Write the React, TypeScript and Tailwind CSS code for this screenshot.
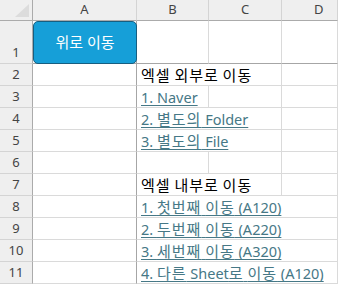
const FONT = { fontFamily: '"Noto Sans", "Noto Sans CJK KR", sans-serif' };

type Row = { n: number; text?: string; link?: boolean; span?: number };

const ROWS: Row[] = [
  { n: 2, text: '엑셀 외부로 이동', span: 2 },
  { n: 3, text: '1. Naver', link: true, span: 1 },
  { n: 4, text: '2. 별도의 Folder', link: true, span: 2 },
  { n: 5, text: '3. 별도의 File', link: true, span: 2 },
  { n: 6 },
  { n: 7, text: '엑셀 내부로 이동', span: 2 },
  { n: 8, text: '1. 첫번째 이동 (A120)', link: true, span: 3 },
  { n: 9, text: '2. 두번째 이동 (A220)', link: true, span: 3 },
  { n: 10, text: '3. 세번째 이동 (A320)', link: true, span: 3 },
  { n: 11, text: '4. 다른 Sheet로 이동 (A120)', link: true, span: 3 },
];

const SPAN: Record<number, string> = {
  1: 'col-span-1',
  2: 'col-span-2',
  3: 'col-span-3',
};

// hangul runs are a touch wider than latin in the sheet font
function CellText({ text }: { text: string }) {
  const parts = text.split(/([\uac00-\ud7a3]+)/).filter(Boolean);
  return (
    <>
      {parts.map((p, i) =>
        /[\uac00-\ud7a3]/.test(p) ? (
          <span key={i} className="text-[15px] tracking-[1px]">
            {p}
          </span>
        ) : (
          <span key={i} className="text-[14.5px]">
            {p}
          </span>
        ),
      )}
    </>
  );
}

function HeadCell({ label, last }: { label: string; last?: boolean }) {
  return (
    <div
      className={`flex h-[21px] items-center border-b border-r border-b-[#ababab] border-r-[#d4d4d4] bg-[#efefef] text-[13px] text-[#444] ${
        last ? 'justify-start pl-[32px]' : 'justify-center'
      }`}
    >
      {label}
    </div>
  );
}

function RowNum({ n, tall }: { n: number; tall?: boolean }) {
  return (
    <div
      className={`flex items-end justify-center border-b border-r border-b-[#d4d4d4] border-r-[#ababab] bg-[#efefef] pb-[1px] text-[13px] text-[#444] ${
        tall ? 'h-[43px]' : 'h-[22px]'
      }`}
    >
      {n}
    </div>
  );
}

export default function App() {
  return (
    <div className="h-[288px] w-[338px] overflow-hidden bg-white" style={FONT}>
      <div className="grid w-[338px] grid-cols-[33px_104px_72px_73px_56px]">
        {/* corner */}
        <div className="relative h-[21px] border-b border-r border-b-[#ababab] border-r-[#ababab] bg-[#efefef]">
          <svg className="absolute right-[3px] bottom-[3px]" width="14" height="13" viewBox="0 0 14 13">
            <polygon points="14,0 14,13 0,13" fill="#dcdcdc" />
          </svg>
        </div>
        <HeadCell label="A" />
        <HeadCell label="B" />
        <HeadCell label="C" />
        <HeadCell label="D" last />

        {/* row 1 */}
        <RowNum n={1} tall />
        <div className="h-[43px] border-b border-r border-b-[#a6a6a6] border-r-[#a6a6a6] bg-white">
          <button className="flex h-[43px] w-[104px] items-center justify-center rounded-[5px] border border-[#175e80] bg-[#169fd8] text-[15px] text-white">
            위로 이동
          </button>
        </div>
        {[0, 1, 2].map((i) => (
          <div key={i} className="h-[43px] border-b border-r border-b-[#a6a6a6] border-r-[#dadada]" />
        ))}

        {ROWS.map((r) => {
          const span = r.span ?? 1;
          const rest = 3 - span;
          return [
            <RowNum key={`n${r.n}`} n={r.n} />,
            <div key={`a${r.n}`} className="h-[22px] border-b border-r border-b-[#dadada] border-r-[#a6a6a6]" />,
            <div
              key={`b${r.n}`}
              className={`flex h-[22px] items-end overflow-visible whitespace-nowrap border-b border-r border-[#dadada] pl-[4px] leading-[20px] ${SPAN[span]}`}
            >
              {r.text && (
                <span
                  className={
                    r.link
                      ? 'text-[#467886] underline decoration-[#467886] decoration-1 underline-offset-[2px]'
                      : 'text-black'
                  }
                >
                  <CellText text={r.text} />
                </span>
              )}
            </div>,
            ...Array.from({ length: rest }, (_, i) => (
              <div key={`r${r.n}-${i}`} className="h-[22px] border-b border-r border-[#dadada]" />
            )),
          ];
        })}
      </div>
    </div>
  );
}
